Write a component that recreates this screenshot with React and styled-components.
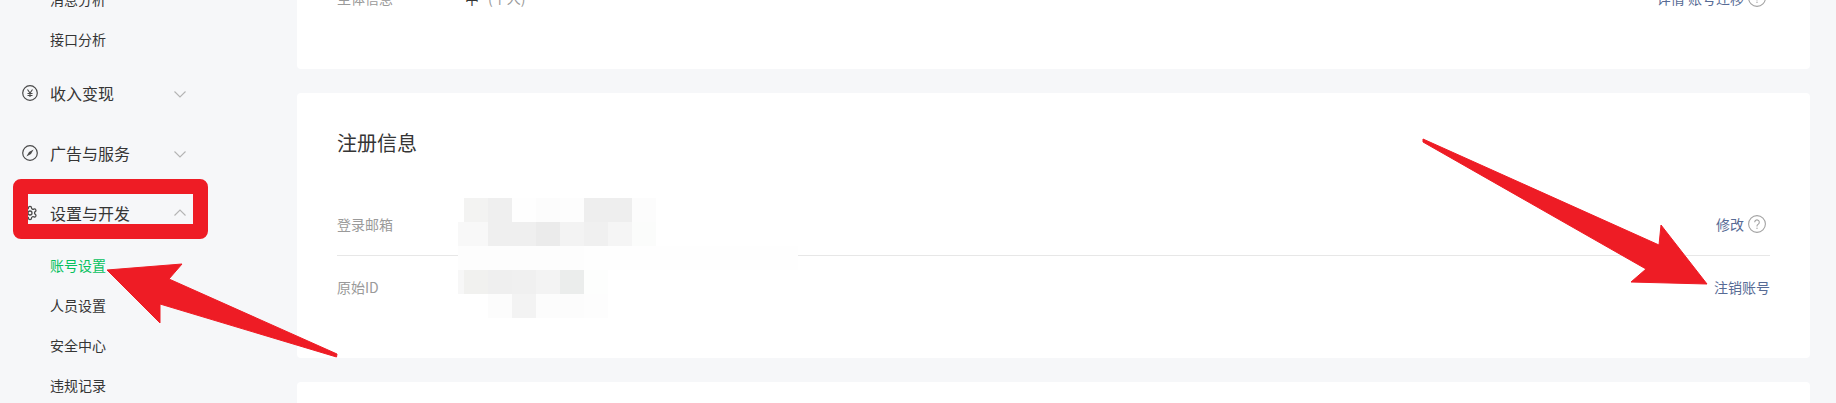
import React from 'react';
import styled, { createGlobalStyle } from 'styled-components';

const GlobalStyle = createGlobalStyle`
    html, body {
        margin: 0;
        padding: 0;
        background: #f6f7f9;
    }
    body {
        font-family: "Noto Sans CJK SC", "Liberation Sans", sans-serif;
        color: #353535;
    }
`;

const Page = styled.div`
    position: relative;
    display: flex;
    width: 1836px;
    height: 403px;
    overflow: hidden;
    background: #f6f7f9;
`;

const Sidebar = styled.nav`
    flex: none;
    display: flex;
    flex-direction: column;
    gap: 3px;
    width: 297px;
    margin-top: -20px;
`;

const SubList = styled.div`
    display: flex;
    flex-direction: column;
`;

const SubItem = styled.div`
    height: 40px;
    line-height: 38px;
    padding-left: 50px;
    font-size: 14px;
    color: ${props => (props.$active ? '#07c160' : '#353535')};
`;

const GroupList = styled.div`
    display: flex;
    flex-direction: column;
`;

const GroupHeader = styled.div`
    display: flex;
    align-items: center;
    height: 60px;
    padding-left: 22px;
    width: 164px;
    font-size: 16px;
    color: #353535;
`;

const GroupLabel = styled.span`
    flex: 1;
    margin-left: 12px;
`;

const ChevronIcon = styled.svg`
    width: 12px;
    height: 7px;
    margin-top: ${props => (props.$up ? '-1px' : '2px')};
`;

const Main = styled.main`
    flex: none;
    display: flex;
    flex-direction: column;
    gap: 24px;
    width: 1513px;
    margin-top: -13px;
`;

const Card = styled.section`
    position: relative;
    flex: none;
    box-sizing: border-box;
    height: ${props => props.$height}px;
    padding: ${props => props.$top}px 40px 0;
    background: #fff;
    border-radius: 4px;
`;

const Title = styled.h3`
    margin: 0 0 36px;
    height: 26px;
    line-height: 26px;
    font-size: 20px;
    font-weight: 400;
    color: #353535;
`;

const Row = styled.div`
    display: flex;
    align-items: center;
    box-sizing: border-box;
    height: ${props => props.$height}px;
    font-size: 14px;
    border-bottom: ${props => (props.$divided ? '1px solid #e7e7e7' : 'none')};
`;

const Label = styled.div`
    flex: none;
    width: 128px;
    color: #9a9a9a;
`;

const Value = styled.div`
    flex: 1;
    display: flex;
    gap: 9px;
    color: #9a9a9a;
`;

const Strong = styled.span`
    color: #353535;
`;

const Action = styled.a`
    display: flex;
    align-items: center;
    gap: 4px;
    color: #576b95;
`;

const HelpIcon = styled.svg`
    width: 18px;
    height: 18px;
    margin-right: 4px;
`;

const Mosaic = styled.svg`
    position: absolute;
    left: 161px;
    top: 105px;
    pointer-events: none;
`;

const Overlay = styled.svg`
    position: absolute;
    left: 0;
    top: 0;
    pointer-events: none;
`;

const Highlight = styled.div`
    position: absolute;
    left: 13px;
    top: 179px;
    box-sizing: border-box;
    width: 195px;
    height: 60px;
    border: 15px solid #ee1c25;
    border-radius: 8px;
`;

const YenIcon = () => (
    <svg width="16" height="16" viewBox="0 0 16 16" fill="none" stroke="#4a4a4a">
        <circle cx="8" cy="8" r="7.3" strokeWidth="1.2" />
        <path d="M5.5 4.5 8 8l2.5-3.5M5.5 8.5h5M5.5 10.5h5M8 8v4" strokeWidth="1.1" />
    </svg>
);

const CompassIcon = () => (
    <svg width="16" height="16" viewBox="0 0 16 16" fill="none" stroke="#4a4a4a">
        <circle cx="8" cy="8" r="7.3" strokeWidth="1.2" />
        <path d="M11.6 4.4 9 9 4.4 11.6 7 7z" fill="#4a4a4a" stroke="none" />
    </svg>
);

const GearIcon = () => (
    <svg width="16" height="16" viewBox="0 0 24 24" fill="none" stroke="#4a4a4a" strokeWidth="1.9" strokeLinejoin="round">
        <path d="M12.2 2h-.4a2 2 0 0 0-2 2v.2a2 2 0 0 1-1 1.7l-.4.3a2 2 0 0 1-2 0l-.2-.1a2 2 0 0 0-2.7.7l-.2.4a2 2 0 0 0 .7 2.7l.2.1a2 2 0 0 1 1 1.7v.5a2 2 0 0 1-1 1.7l-.2.1a2 2 0 0 0-.7 2.7l.2.4a2 2 0 0 0 2.7.7l.2-.1a2 2 0 0 1 2 0l.4.3a2 2 0 0 1 1 1.7v.2a2 2 0 0 0 2 2h.4a2 2 0 0 0 2-2v-.2a2 2 0 0 1 1-1.7l.4-.3a2 2 0 0 1 2 0l.2.1a2 2 0 0 0 2.7-.7l.2-.4a2 2 0 0 0-.7-2.7l-.2-.1a2 2 0 0 1-1-1.7v-.5a2 2 0 0 1 1-1.7l.2-.1a2 2 0 0 0 .7-2.7l-.2-.4a2 2 0 0 0-2.7-.7l-.2.1a2 2 0 0 1-2 0l-.4-.3a2 2 0 0 1-1-1.7V4a2 2 0 0 0-2-2z" />
        <circle cx="12" cy="12" r="3" />
    </svg>
);

const Chevron = ({ up }) => (
    <ChevronIcon $up={up} viewBox="0 0 12 7" fill="none" stroke="#b4b4b4" strokeWidth="1.1">
        <path d={up ? 'M.5 6.5 6 1l5.5 5.5' : 'M.5.5 6 6 11.5.5'} />
    </ChevronIcon>
);

const Help = () => (
    <HelpIcon viewBox="0 0 18 18" fill="none" stroke="#a3a3a3">
        <circle cx="9" cy="9" r="8.4" strokeWidth="1.1" />
        <path d="M6.7 7.2a2.3 2.3 0 1 1 3.6 1.9c-.8.5-1.3 1-1.3 1.9v.4" strokeWidth="1.1" />
        <circle cx="9" cy="13.3" r=".7" fill="#a3a3a3" stroke="none" />
    </HelpIcon>
);

// mosaic tiles over the blurred account values: x, width, colour per row
const mosaicRows = [
    { y: 0, tiles: [[6, 24, '#f3f3f2'], [30, 24, '#efefef'], [54, 24, '#fefefe'], [78, 24, '#fcfcfc'], [102, 24, '#fdfdfd'], [126, 48, '#eeeeee'], [174, 24, '#fcfcfc']] },
    { y: 24, tiles: [[0, 30, '#f8f8f8'], [30, 48, '#efefef'], [78, 24, '#ebebeb'], [102, 24, '#f3f3f3'], [126, 24, '#f0f0f0'], [150, 24, '#f5f5f5'], [174, 24, '#fbfcfb']] },
    { y: 48, tiles: [[0, 126, '#fdfdfd'], [126, 214, '#fefefe']] },
    { y: 72, tiles: [[0, 6, '#f7f7f7'], [6, 24, '#f1f1ef'], [30, 24, '#efefef'], [54, 24, '#f0f0f0'], [78, 24, '#f3f3f3'], [102, 24, '#ebedec'], [126, 24, '#fdfefd']] },
    { y: 96, tiles: [[30, 24, '#fcfcfc'], [54, 24, '#f3f3f3'], [78, 48, '#fcfcfc'], [126, 24, '#fdfdfd']] },
];

const App = () => {
    return (
        <Page>
            <GlobalStyle />
            <Sidebar>
                <SubList>
                    <SubItem>消息分析</SubItem>
                    <SubItem>接口分析</SubItem>
                </SubList>
                <GroupList>
                    <GroupHeader>
                        <YenIcon />
                        <GroupLabel>收入变现</GroupLabel>
                        <Chevron />
                    </GroupHeader>
                    <GroupHeader>
                        <CompassIcon />
                        <GroupLabel>广告与服务</GroupLabel>
                        <Chevron />
                    </GroupHeader>
                    <GroupHeader>
                        <GearIcon />
                        <GroupLabel>设置与开发</GroupLabel>
                        <Chevron up />
                    </GroupHeader>
                </GroupList>
                <SubList>
                    <SubItem $active>账号设置</SubItem>
                    <SubItem>人员设置</SubItem>
                    <SubItem>安全中心</SubItem>
                    <SubItem>违规记录</SubItem>
                </SubList>
            </Sidebar>
            <Main>
                <Card $height={82} $top={0}>
                    <Row $height={22}>
                        <Label>主体信息</Label>
                        <Value><Strong>中</Strong><span>(个人)</span></Value>
                        <Action>详情 账号迁移<Help /></Action>
                    </Row>
                </Card>
                <Card $height={265} $top={37}>
                    <Title>注册信息</Title>
                    <Row $height={64} $divided>
                        <Label>登录邮箱</Label>
                        <Value />
                        <Action>修改<Help /></Action>
                    </Row>
                    <Row $height={62}>
                        <Label>原始ID</Label>
                        <Value />
                        <Action>注销账号</Action>
                    </Row>
                    <Mosaic width="340" height="120" shapeRendering="crispEdges">
                        {mosaicRows.map(row => row.tiles.map(([x, w, fill]) => (
                            <rect key={`${row.y}-${x}`} x={x} y={row.y} width={w} height="24" fill={fill} />
                        )))}
                    </Mosaic>
                </Card>
                <Card $height={120} $top={0} />
            </Main>
            <Highlight />
            <Overlay width="1836" height="403" fill="#ee1c25" stroke="#ee1c25" strokeWidth="1" strokeLinejoin="round">
                <path d="M107 270 182 264 169 279 337 354 336.5 357 160 304 160 323z" />
                <path d="M1423 139 1659 245 1661 225 1707 284 1631 282 1646 269 1423 142z" />
            </Overlay>
        </Page>
    );
};

export default App;
